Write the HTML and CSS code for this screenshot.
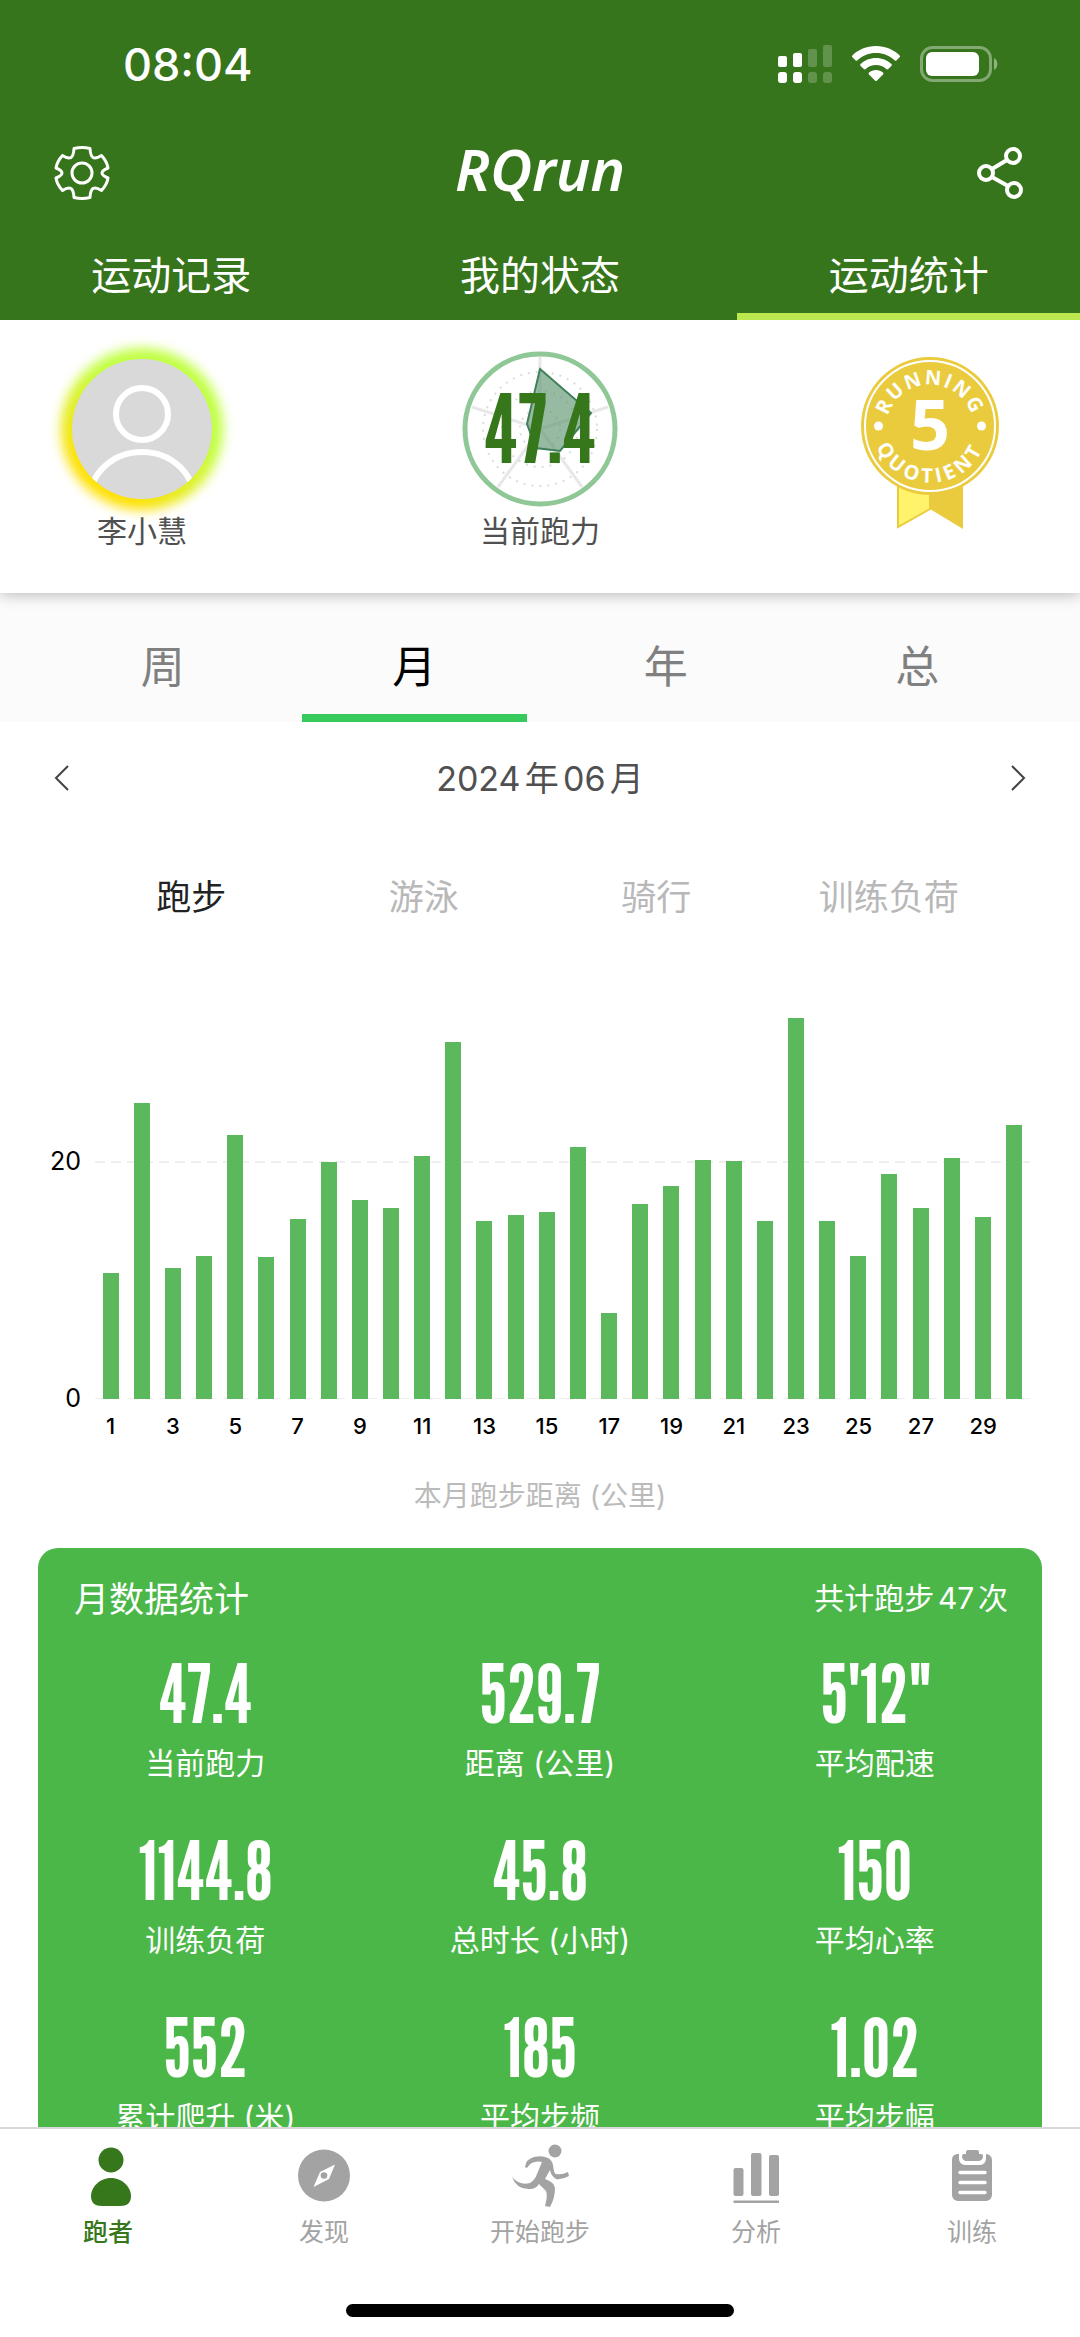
FILE: index.html
```html
<!DOCTYPE html>
<html lang="zh-CN">
<head>
<meta charset="utf-8">
<meta name="viewport" content="width=device-width, initial-scale=1">
<title>RQrun 运动统计</title>
<link rel="stylesheet" href="styles.css">
</head>
<body>
<div class="app">
  <header class="header">
    <div class="status">
      <time class="clock">08:04</time>
      <div class="status-icons">
        <svg width="54" height="38" viewBox="0 0 54 38" fill="#fff" aria-hidden="true">
          <rect x="0" y="11" width="9" height="11" rx="2"/><rect x="15" y="8" width="9" height="14" rx="2"/>
          <rect x="30" y="4" width="9" height="18" rx="2" opacity=".22"/><rect x="45" y="0" width="9" height="22" rx="2" opacity=".22"/>
          <rect x="0" y="27" width="9" height="11" rx="3"/><rect x="15" y="27" width="9" height="11" rx="3"/>
          <rect x="30" y="27" width="9" height="11" rx="3" opacity=".22"/><rect x="45" y="27" width="9" height="11" rx="3" opacity=".22"/>
        </svg>
        <svg width="48" height="36" viewBox="0 0 48 36" fill="#fff" aria-hidden="true">
          <path d="M24 0C14.600 0 6.200 3.600.4 9.400a1.300 1.300 0 0 0 0 1.900l3 3a1.400 1.400 0 0 0 2 0C10.200 9.700 16.700 7 24 7s13.800 2.700 18.600 7.300a1.400 1.400 0 0 0 2 0l3-3a1.300 1.300 0 0 0 0-1.900C41.800 3.600 33.400 0 24 0z"/>
          <path d="M24 12c-6 0-11.400 2.300-15.400 6a1.300 1.300 0 0 0 0 1.900l3.200 3.100a1.400 1.400 0 0 0 1.900 0C16.400 20.600 20 19 24 19s7.600 1.600 10.300 4a1.400 1.400 0 0 0 1.900 0l3.200-3.100a1.300 1.300 0 0 0 0-1.900C35.400 14.300 30 12 24 12z"/>
          <path d="M24 24c-2.700 0-5.100.9-7 2.500a1.300 1.300 0 0 0 0 1.900l6 6.100a1.400 1.400 0 0 0 2 0l6-6.100a1.300 1.300 0 0 0 0-1.900C29.100 24.900 26.700 24 24 24z"/>
        </svg>
        <svg width="80" height="36" viewBox="0 0 80 36" aria-hidden="true">
          <rect x="1.500" y="1.500" width="69" height="33" rx="11" fill="none" stroke="#fff" stroke-width="3" opacity=".38"/>
          <rect x="6" y="6" width="53" height="24" rx="6" fill="#fff"/>
          <path d="M74 12a7 7 0 0 1 0 12z" fill="#fff" opacity=".45"/>
        </svg>
      </div>
    </div>
    <div class="titlebar">
      <button class="icon-button" type="button" aria-label="设置">
        <svg width="56" height="56" viewBox="-28 -28 56 56" fill="none" stroke="#fff" stroke-width="3" stroke-linejoin="round" aria-hidden="true">
          <circle r="10"/>
          <path d="M-8-24.500Q0-26.500 8-24.500Q8.500-17 11-15.500Q14-14 19.500-17.500Q25-11.500 26-5Q20-2.500 20 0Q20 2.500 26 5Q25 11.500 19.500 17.500Q14 14 11 15.500Q8.500 17 8 24.500Q0 26.500-8 24.500Q-8.500 17-11 15.500Q-14 14-19.500 17.500Q-25 11.500-26 5Q-20 2.500-20 0Q-20-2.500-26-5Q-25-11.500-19.500-17.500Q-14-14-11-15.500Q-8.500-17-8-24.500Z"/>
        </svg>
      </button>
      <h1 class="logo">RQrun</h1>
      <button class="icon-button" type="button" aria-label="分享">
        <svg width="50" height="52" viewBox="0 0 50 52" fill="none" stroke="#fff" stroke-width="4" aria-hidden="true">
          <circle cx="37" cy="9" r="7"/><circle cx="10" cy="26" r="7"/><circle cx="38" cy="43" r="7"/><path d="M16 22L31 13M16 30l16 9"/>
        </svg>
      </button>
    </div>
    <nav class="main-tabs">
      <button type="button">运动记录</button>
      <button type="button">我的状态</button>
      <button type="button" class="active">运动统计</button>
    </nav>
  </header>

  <section class="profile">
    <div class="profile-item">
      <div class="avatar-box">
        <div class="avatar">
          <svg width="140" height="140" viewBox="0 0 140 140" aria-hidden="true">
            <defs><clipPath id="face"><circle cx="70" cy="70" r="70"/></clipPath></defs>
            <circle cx="70" cy="70" r="70" fill="#d9d9d9"/>
            <g clip-path="url(#face)" fill="none" stroke="#fff" stroke-width="6">
              <circle cx="70" cy="55" r="26"/><path d="M18 140a52 47 0 0 1 104 0"/>
            </g>
          </svg>
        </div>
      </div>
      <span>李小慧</span>
    </div>
    <div class="profile-item">
      <svg width="184" height="156" viewBox="-92 -78 184 156" role="img" aria-label="当前跑力 47.4">
        <circle r="75" fill="#fff" stroke="#8fc796" stroke-width="5"/>
        <path d="M0 0V-72M0 0L68-22M0 0L42 58M0 0L-42 58M0 0L-68-22" stroke="#e8e8e8" stroke-width="3"/>
        <g fill="none" stroke="#dcdcdc" stroke-width="2" stroke-dasharray="2 6"><circle r="57"/><circle r="38"/><circle r="20"/></g>
        <path d="M0-60L51-16L20 22L-4 19L-13-5Z" fill="#5d9670" fill-opacity=".65" stroke="#3f805b" stroke-width="2"/>
        <text class="ring-value" x="0" y="34" text-anchor="middle">47.4</text>
      </svg>
      <span>当前跑力</span>
    </div>
    <div class="profile-item">
      <svg class="medal" width="168" height="180" viewBox="-84 -75 168 180" role="img" aria-label="Running Quotient 5">
        <path d="M-32 50H0V83L-32 101Z" fill="#fff36b" stroke="#ebcb3e" stroke-width="2"/>
        <path d="M0 50H33V103L0 83Z" fill="#ebcb3e"/>
        <circle r="69" fill="#ebcb3e"/><circle r="65" fill="none" stroke="#fff" stroke-width="2"/>
        <path id="arc-top" d="M-43 12A44 44 0 1 1 43 12" fill="none"/>
        <path id="arc-bottom" d="M-57-12A58 58 0 1 0 57-12" fill="none"/>
        <g class="medal-ring" fill="#fff" text-anchor="middle">
          <text><textPath href="#arc-top" startOffset="50%">RUNNING</textPath></text>
          <text class="medal-bottom"><textPath href="#arc-bottom" startOffset="50%">QUOTIENT</textPath></text>
        </g>
        <circle cx="-51.500" r="4.500" fill="#fff"/><circle cx="51.500" r="4.500" fill="#fff"/>
        <text class="medal-value" x="0" y="24" text-anchor="middle">5</text>
      </svg>
    </div>
  </section>

  <main class="content">
    <nav class="period-tabs">
      <button type="button">周</button>
      <button type="button" class="active">月</button>
      <button type="button">年</button>
      <button type="button">总</button>
    </nav>
    <div class="date-row">
      <button type="button" class="arrow" aria-label="上个月"><svg width="16" height="26" viewBox="0 0 16 26" fill="none" stroke="#444" stroke-width="2"><path d="M14 1L2 13l12 12"/></svg></button>
      <span>2024年06月</span>
      <button type="button" class="arrow" aria-label="下个月"><svg width="16" height="26" viewBox="0 0 16 26" fill="none" stroke="#444" stroke-width="2"><path d="M2 1l12 12L2 25"/></svg></button>
    </div>
    <nav class="sport-tabs">
      <button type="button" class="active">跑步</button>
      <button type="button">游泳</button>
      <button type="button">骑行</button>
      <button type="button">训练负荷</button>
    </nav>
    <figure class="chart">
      <div class="y-axis"><span>20</span><span>0</span></div>
      <div class="plot">
        <i style="height:126px"></i><i style="height:296px"></i><i style="height:131px"></i><i style="height:143px"></i><i style="height:264px"></i>
        <i style="height:142px"></i><i style="height:180px"></i><i style="height:237px"></i><i style="height:199px"></i><i style="height:191px"></i>
        <i style="height:243px"></i><i style="height:357px"></i><i style="height:178px"></i><i style="height:184px"></i><i style="height:187px"></i>
        <i style="height:252px"></i><i style="height:86px"></i><i style="height:195px"></i><i style="height:213px"></i><i style="height:239px"></i>
        <i style="height:238px"></i><i style="height:178px"></i><i style="height:381px"></i><i style="height:178px"></i><i style="height:143px"></i>
        <i style="height:225px"></i><i style="height:191px"></i><i style="height:241px"></i><i style="height:182px"></i><i style="height:274px"></i>
      </div>
      <div class="x-axis">
        <span>1</span><span></span><span>3</span><span></span><span>5</span><span></span><span>7</span><span></span><span>9</span><span></span>
        <span>11</span><span></span><span>13</span><span></span><span>15</span><span></span><span>17</span><span></span><span>19</span><span></span>
        <span>21</span><span></span><span>23</span><span></span><span>25</span><span></span><span>27</span><span></span><span>29</span><span></span>
      </div>
      <figcaption>本月跑步距离 (公里)</figcaption>
    </figure>
    <section class="card">
      <div class="card-head"><h2>月数据统计</h2><p>共计跑步47次</p></div>
      <dl class="stats">
        <div><dd>47.4</dd><dt>当前跑力</dt></div>
        <div><dd>529.7</dd><dt>距离 (公里)</dt></div>
        <div><dd>5'12"</dd><dt>平均配速</dt></div>
        <div><dd>1144.8</dd><dt>训练负荷</dt></div>
        <div><dd>45.8</dd><dt>总时长 (小时)</dt></div>
        <div><dd>150</dd><dt>平均心率</dt></div>
        <div><dd>552</dd><dt>累计爬升 (米)</dt></div>
        <div><dd>185</dd><dt>平均步频</dt></div>
        <div><dd>1.02</dd><dt>平均步幅</dt></div>
      </dl>
    </section>
  </main>

  <footer class="footer">
    <nav class="bottom-nav">
      <a href="#runner" class="active">
        <svg viewBox="0 0 64 64"><circle cx="35" cy="17" r="12.500"/><path d="M35 35c12 0 20 10 20 18 0 7-4 10-11 10H26c-7 0-11-3-11-10 0-8 8-18 20-18z"/></svg>
        <span>跑者</span>
      </a>
      <a href="#discover">
        <svg viewBox="0 0 64 64"><path fill-rule="evenodd" d="M32 6.500a26 26 0 1 0 0 52 26 26 0 0 0 0-52zM43 21.500L37 36l-15.500 8L28 29z"/><circle cx="32" cy="32.500" r="3.300"/></svg>
        <span>发现</span>
      </a>
      <a href="#run">
        <svg viewBox="0 0 64 64"><circle cx="47" cy="8" r="6.500"/><path d="M4 34Q12 43 22 40Q27 37 29 31L34 19Q24 17 19 25L17 24Q18 16 26 14Q34 12 40 15Q44 17 45 22Q46 31 48 31Q54 32 60 29L61 33Q54 37 48 36Q43 33 42 27L37 36Q46 39 47 45Q47 55 42 64L37 63Q40 52 38 48L31 41Q28 46 22 46Q9 47 4 34Z"/></svg>
        <span>开始跑步</span>
      </a>
      <a href="#analysis">
        <svg viewBox="0 0 64 64"><rect x="9.500" y="25" width="10" height="28" rx="2"/><rect x="27" y="10" width="10.500" height="43" rx="2"/><rect x="45" y="12" width="10" height="41" rx="2"/><rect x="9.500" y="57.500" width="45.500" height="2.500"/></svg>
        <span>分析</span>
      </a>
      <a href="#training">
        <svg viewBox="0 0 64 64"><path d="M17 11h2v5a6 6 0 0 0 6 6h15a6 6 0 0 0 6-6v-5a6 6 0 0 1 6 6v35a6 6 0 0 1-6 6H18a6 6 0 0 1-6-6V17a6 6 0 0 1 5-6z"/><path d="M28 7h9a2 2 0 0 1 2 2v2h2a2 2 0 0 1 2 2c0 3-2 5-5 5H27c-3 0-5-2-5-5a2 2 0 0 1 2-2h2V9a2 2 0 0 1 2-2z"/><path d="M20 29.500h25M20 39.500h25M20 49.500h25" stroke="#fff" stroke-width="3.500" stroke-linecap="round"/></svg>
        <span>训练</span>
      </a>
    </nav>
    <div class="home-indicator"></div>
  </footer>
</div>
</body>
</html>
```
FILE: styles.css
```css
* { box-sizing: border-box; margin: 0; padding: 0; }

body {
  background: #fff;
  color: #505050;
  font-family: Inter, "Noto Sans CJK SC", sans-serif;
  font-size: 30px;
  text-autospace: normal;
}

button {
  border: 0;
  background: none;
  color: inherit;
  font: inherit;
  cursor: pointer;
}

svg { display: block; }

.app { display: flex; flex-direction: column; height: 100vh; overflow: hidden; }

/* Header */
.header { background: #37751c; color: #fff; }
.status { display: flex; align-items: center; justify-content: space-between; height: 128px; padding: 0 80px 0 123px; }
.clock { font-size: 45px; font-weight: 500; }
.status-icons { display: flex; align-items: center; gap: 20px; }
.titlebar { display: grid; grid-template-columns: 1fr auto 1fr; align-items: center; height: 90px; padding: 0 54px; }
.icon-button:last-child { justify-self: end; }
.logo { padding-bottom: 8px; font: italic 600 58px/64px "Noto Sans", "Open Sans", sans-serif; }
.main-tabs { display: grid; grid-template-columns: repeat(3, 1fr); gap: 26px; height: 102px; }
.main-tabs button { padding-top: 14px; border-bottom: 7px solid transparent; font-size: 40px; }
.main-tabs .active { border-color: #bbe84f; }

/* Profile summary */
.profile {
  position: relative;
  display: flex;
  justify-content: space-between;
  padding: 31px 50px 38px;
  background: #fff;
  box-shadow: 0 2px 14px rgba(0, 0, 0, .26);
  clip-path: inset(0 0 -20px 0);
}
.profile-item { width: 184px; text-align: center; }
.profile-item span { display: block; line-height: 48px; }
.avatar-box { display: grid; place-items: center; height: 156px; }
.avatar { position: relative; }
.avatar svg { position: relative; }
.avatar::before {
  content: "";
  position: absolute;
  inset: -11px;
  border-radius: 50%;
  background: linear-gradient(35deg, #ffe000 20%, #c0ff40 62%);
  filter: blur(6px);
}
.ring-value, .stats dd {
  font-family: "League Gothic", "Bebas Neue", "Open Sans Condensed", "Liberation Sans Narrow", "Open Sans", sans-serif;
  font-weight: 400;
}
.ring-value { fill: #37771c; font-size: 96px; }
.medal-ring { font: 700 20px "Open Sans", sans-serif; letter-spacing: 2px; }
.medal-bottom { letter-spacing: 4px; }
.medal-value { fill: #fff; font: 700 70px "Open Sans", sans-serif; }

/* Statistics */
.content { flex: 1; min-height: 0; overflow: hidden; }
.period-tabs { display: grid; grid-template-columns: repeat(4, 1fr); gap: 26px; height: 129px; padding: 0 50px; background: #fbfbfb; color: #808080; }
.period-tabs button { padding-top: 20px; border-bottom: 8px solid transparent; font-size: 44px; }
.period-tabs .active { border-color: #36c95b; color: #000; }
.date-row { display: flex; align-items: center; justify-content: space-between; height: 112px; padding: 0 54px; font-size: 34px; }
.date-row span { padding-bottom: 4px; }
.sport-tabs { display: grid; grid-template-columns: repeat(4, 1fr); height: 126px; padding: 0 75px; color: #b8b8b8; }
.sport-tabs button { padding-bottom: 6px; font-size: 35px; }
.sport-tabs .active { color: #222; }

.chart { display: grid; grid-template-columns: 95px 1fr; grid-template-rows: 439px 54px 95px; padding-right: 50px; color: #000; }
.y-axis { display: flex; flex-direction: column; justify-content: flex-end; gap: 207px; padding-right: 14px; font-size: 25px; line-height: 30px; text-align: right; }
.y-axis span:last-child { margin-bottom: -14px; }
.plot {
  display: flex;
  align-items: flex-end;
  justify-content: space-around;
  background:
    repeating-linear-gradient(90deg, #efefef 0 10px, transparent 10px 16px) 0 100% / 100% 1px no-repeat,
    repeating-linear-gradient(90deg, #efefef 0 10px, transparent 10px 16px) 0 201px / 100% 2px no-repeat;
}
.plot i { width: 16px; background: #5cb85c; }
.x-axis { grid-column: 2; display: grid; grid-template-columns: repeat(30, 1fr); font-size: 22px; font-weight: 500; line-height: 54px; }
.x-axis span { display: flex; justify-content: center; min-width: 0; }
.chart figcaption { grid-column: 1 / -1; padding-left: 50px; color: #bbb; font-size: 28px; line-height: 86px; text-align: center; }

.card { margin: 0 38px; padding-bottom: 39px; border-radius: 20px; background: #4bb748; color: #fff; }
.card-head { display: flex; align-items: center; justify-content: space-between; height: 96px; margin-bottom: 3px; padding: 0 34px 0 36px; }
.card-head h2 { font-size: 35px; font-weight: 400; }
.stats { display: grid; grid-template-columns: repeat(3, 1fr); row-gap: 39px; text-align: center; }
.stats div { display: flex; flex-direction: column; }
.stats dd { font-size: 80px; line-height: 94px; }
.stats dt { line-height: 44px; }

/* Bottom navigation */
.footer { padding-bottom: 20px; border-top: 2px solid #d8d8d8; background: #fff; }
.bottom-nav { display: grid; grid-template-columns: repeat(5, 1fr); padding: 14px 0 47px; }
.bottom-nav a { display: flex; flex-direction: column; align-items: center; color: #a3a3a3; font-size: 25px; line-height: 50px; text-decoration: none; }
.bottom-nav svg { width: 64px; height: 64px; fill: currentColor; }
.bottom-nav .active { color: #37771c; font-weight: 500; }
.home-indicator { width: 36%; height: 13px; margin: 0 auto; border-radius: 7px; background: #000; }
```
